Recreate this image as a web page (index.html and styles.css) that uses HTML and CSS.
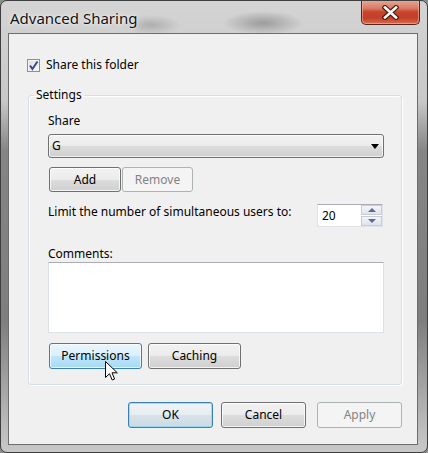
FILE: index.html
```html
<!DOCTYPE html>
<html lang="en">
  <head>
    <meta charset="utf-8">
    <title>Advanced Sharing</title>
    <link rel="stylesheet" href="styles.css">
  </head>

  <body>
    <div class="window">
      <header class="titlebar">
        <h1 class="title">Advanced Sharing</h1>
        <button type="button" class="close" aria-label="Close">
          <svg width="17" height="15" viewBox="0 0 17 15">
            <path d="M3 2.5 14 12.5 M14 2.5 3 12.5" stroke="#4a1d12" stroke-width="5" stroke-linecap="square" />
            <path d="M3 2.5 14 12.5 M14 2.5 3 12.5" stroke="#fff" stroke-width="2.6" stroke-linecap="square" />
          </svg>
        </button>
      </header>

      <div class="frame">
        <form class="client">
          <label class="check-row">
            <span class="checkbox">
              <svg width="11" height="11" viewBox="0 0 11 11">
                <path d="M2 5.5 4.4 9 9.5 1.5" fill="none" stroke="#3a4a92" stroke-width="2" />
              </svg>
            </span>
            Share this folder
          </label>

          <fieldset class="settings">
            <legend>Settings</legend>

            <div class="field-label">Share</div>
            <div class="combo">
              <span>G</span>
              <span class="combo-arrow"></span>
            </div>

            <div class="btn-row share-buttons">
              <button type="button" class="btn add">Add</button>
              <button type="button" class="btn remove" disabled>Remove</button>
            </div>

            <div class="limit-row">
              <span>Limit the number of simultaneous users to:</span>
              <div class="spinner">
                <span class="spin-value">20</span>
                <span class="spin-buttons">
                  <span class="spin up"></span>
                  <span class="spin down"></span>
                </span>
              </div>
            </div>

            <div class="field-label comments-label">Comments:</div>
            <div class="comments"></div>

            <div class="btn-row extra-buttons">
              <button type="button" class="btn wide hover">Permissions</button>
              <button type="button" class="btn wide">Caching</button>
            </div>
          </fieldset>

          <div class="dialog-buttons">
            <button type="button" class="btn dlg default">OK</button>
            <button type="button" class="btn dlg cancel">Cancel</button>
            <button type="button" class="btn dlg" disabled>Apply</button>
          </div>
        </form>
      </div>

      <!-- mouse pointer resting on Permissions -->
      <svg class="pointer" width="13" height="20" viewBox="0 0 13 20">
        <path d="M0.5 0.5V16.5L4.5 12.7 7.2 19 9.6 18 7 11.8H12.3Z" fill="#fff" stroke="#000" stroke-width="1" stroke-linejoin="round" />
      </svg>
    </div>
  </body>
</html>
```

FILE: styles.css
```css
* {
  box-sizing: border-box;
}

body {
  margin: 0;
  background: #8c8c8c;
  font-family: "Noto Sans", "Open Sans", sans-serif;
  font-size: 12px;
  line-height: 16px;
  color: #000;
}

/* window chrome */
.window {
  position: relative;
  display: flex;
  flex-flow: column;
  width: 428px;
  height: 453px;
  border: 1px solid #3e3e3e;
  border-radius: 7px;
  overflow: hidden;
  background:
    radial-gradient(ellipse 40px 12px at 262px 22px, rgba(90, 90, 90, 0.45), transparent),
    radial-gradient(ellipse 30px 10px at 150px 24px, rgba(110, 110, 110, 0.35), transparent),
    linear-gradient(to bottom, #d4d4d4 0, #c8c8c8 100px, #858585 150px, #7e7e7e 320px, #b8b8b8 420px, #c8c8c8 100%);
}

.titlebar {
  display: flex;
  align-items: flex-start;
  height: 32px;
  padding-left: 9px;
  padding-right: 7px;
}

.title {
  margin: 7px 0 0;
  font-size: 15px;
  font-weight: normal;
  line-height: 20px;
  color: #111;
  text-shadow: 0 0 6px rgba(255, 255, 255, 0.9), 0 0 2px rgba(255, 255, 255, 0.9);
}

.close {
  display: grid;
  place-items: center;
  margin-left: auto;
  margin-top: -1px;
  width: 59px;
  height: 25px;
  padding: 0;
  border: 1px solid #5a2418;
  border-top: 0;
  border-radius: 0 0 5px 5px;
  background: linear-gradient(to bottom, #e9a99a 0, #d97a64 35%, #c7432b 50%, #c2402a 75%, #d96d4f 100%);
  box-shadow: inset 0 0 0 1px rgba(255, 200, 180, 0.5);
}

.frame {
  flex: 1;
  display: flex;
  padding: 0 9px 7px 7px;
}

.client {
  flex: 1;
  display: flex;
  flex-flow: column;
  margin: 0;
  border: 1px solid #6d6d6d;
  background: #f0f0f0;
  padding: 23px 15px 0 19px;
}

/* checkbox */
.check-row {
  display: flex;
  align-items: center;
  gap: 6px;
  height: 16px;
  margin-left: -1px;
}

.checkbox {
  display: grid;
  place-items: center;
  width: 13px;
  height: 13px;
  border: 1px solid #8e8f8f;
  background: linear-gradient(135deg, #dcdcdc, #fbfbfb);
  box-shadow: inset 0 0 0 1px #f4f4f4;
}

/* Settings group box */
.settings {
  display: flex;
  flex-flow: column;
  margin: 14px 0 0;
  padding: 0 17px 15px 19px;
  border: 1px solid #d5dfe5;
  border-radius: 3px;
  box-shadow: inset 1px 1px 0 #fff, 1px 1px 0 #fff;
}

.settings legend {
  margin-left: -14px;
  padding: 0 2px;
  line-height: 16px;
}

.field-label {
  margin-top: 10px;
}

.combo {
  display: flex;
  align-items: center;
  justify-content: space-between;
  height: 24px;
  margin-top: 5px;
  padding: 0 4px 0 3px;
  border: 1px solid #707070;
  border-radius: 3px;
  background: linear-gradient(to bottom, #f2f2f2 0, #ebebeb 50%, #dddddd 51%, #cfcfcf 100%);
  box-shadow: inset 0 0 0 1px rgba(255, 255, 255, 0.7);
}

.combo-arrow {
  width: 0;
  height: 0;
  border-left: 4px solid transparent;
  border-right: 4px solid transparent;
  border-top: 5px solid #000;
}

/* push buttons */
.btn {
  height: 25px;
  padding: 0;
  border: 1px solid #707070;
  border-radius: 3px;
  background: linear-gradient(to bottom, #f2f2f2 0, #ebebeb 50%, #dddddd 51%, #cfcfcf 100%);
  box-shadow: inset 0 0 0 1px rgba(255, 255, 255, 0.75);
  font: inherit;
  color: #000;
}

.btn:disabled {
  border-color: #adb2b5;
  background: #f4f4f4;
  box-shadow: none;
  color: #838383;
}

.btn.hover {
  border-color: #3c7fb1;
  background: linear-gradient(to bottom, #eaf6fd 0, #d9f0fc 50%, #bee6fd 51%, #a7d9f5 100%);
}

.btn.default {
  border-color: #3c7fb1;
  background: linear-gradient(to bottom, #eef3f6 0, #e6edf1 50%, #d8e2e9 51%, #cddae3 100%);
  box-shadow: inset 0 0 0 1px rgba(140, 215, 245, 0.8);
}

.btn-row {
  display: flex;
}

.share-buttons {
  gap: 1px;
  margin-top: 9px;
  margin-left: 1px;
}

.add {
  width: 72px;
}

.remove {
  width: 71px;
}

.limit-row {
  display: flex;
  align-items: flex-start;
  margin-top: 12px;
}

.spinner {
  display: flex;
  width: 66px;
  height: 23px;
  margin-left: auto;
  margin-right: 1px;
  border: 1px solid #e2e3ea;
  border-top-color: #abadb3;
  background: #fff;
}

.spin-value {
  flex: 1;
  padding: 3px 0 0 4px;
}

.spin-buttons {
  display: flex;
  flex-flow: column;
  gap: 1px;
  width: 21px;
}

.spin {
  flex: 1;
  display: grid;
  place-items: center;
  border: 1px solid #c8ccd6;
  background: linear-gradient(to bottom, #f4f5f8, #dfe3ec);
}

.spin::before {
  content: "";
  border-left: 4px solid transparent;
  border-right: 4px solid transparent;
}

.spin.up::before {
  border-bottom: 4px solid #5a6b94;
}

.spin.down::before {
  border-top: 4px solid #5a6b94;
}

.comments-label {
  margin-top: 19px;
}

.comments {
  height: 71px;
  border: 1px solid #dbdfe6;
  border-top-color: #abadb3;
  background: #fff;
}

.extra-buttons {
  gap: 6px;
  margin-top: 10px;
  margin-left: 1px;
}

.wide {
  width: 93px;
  height: 26px;
}

/* OK / Cancel / Apply */
.dialog-buttons {
  display: flex;
  justify-content: flex-end;
  gap: 8px;
  margin-top: 17px;
}

.dlg {
  width: 85px;
  height: 26px;
}

.cancel {
  margin-right: 3px;
}

.pointer {
  position: absolute;
  left: 104px;
  top: 360px;
}
```
